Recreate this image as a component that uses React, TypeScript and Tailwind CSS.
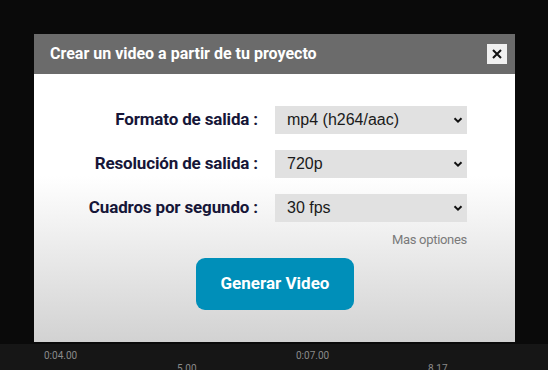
import { useState } from "react";

const Chevron = () => (
    <svg width="10" height="8" viewBox="0 0 10 8" className="pointer-events-none">
        <path d="M1.5 2.2 L5 5.6 L8.5 2.2" fill="none" stroke="#111" strokeWidth="2" />
    </svg>
);

type Field = {
    label: string;
    value: string;
    options: string[];
};

const SelectRow = ({ field, onChange }: { field: Field; onChange: (v: string) => void }) => (
    <div className="flex items-center h-[28px]">
        <label className="w-[224px] pr-[17px] text-right text-[17px] font-bold text-[#161638] tracking-[-0.15px] font-['Roboto',sans-serif]">
            {field.label}
        </label>
        <div className="relative w-[192px] h-[28px] bg-[#e1e1e1]">
            <select
                value={field.value}
                onChange={e => onChange(e.target.value)}
                className="appearance-none w-full h-full bg-transparent pl-[12px] text-[16px] text-[#1a1a1a] font-['Liberation_Sans',Arial,sans-serif] outline-none"
            >
                {field.options.map(o => (
                    <option key={o}>{o}</option>
                ))}
            </select>
            <span className="absolute right-[4px] top-[10px]">
                <Chevron />
            </span>
        </div>
    </div>
);

const App = () => {
    const [fields, setFields] = useState<Field[]>([
        { label: "Formato de salida :", value: "mp4 (h264/aac)", options: ["mp4 (h264/aac)", "webm (vp9)"] },
        { label: "Resolución de salida :", value: "720p", options: ["480p", "720p", "1080p"] },
        { label: "Cuadros por segundo :", value: "30 fps", options: ["24 fps", "30 fps", "60 fps"] },
    ]);

    return (
        <div className="w-[548px] h-[370px] bg-[#0a0a0a] flex flex-col overflow-hidden font-['Roboto',sans-serif]">
            <div className="h-[34px]" />
            <div className="ml-[34px] w-[481px] h-[308px] flex flex-col">
                <div className="h-[40px] bg-[#6b6b6b] flex items-center justify-between pl-[16px] pr-[8px]">
                    <h2 className="text-white text-[16px] font-bold">
                        Crear un video a partir de tu proyecto
                    </h2>
                    <button className="w-[20px] h-[20px] bg-[#f0f0f0] flex items-center justify-center">
                        <svg width="10" height="10" viewBox="0 0 10 10">
                            <path d="M1 1 L9 9 M9 1 L1 9" stroke="#111" strokeWidth="2" />
                        </svg>
                    </button>
                </div>
                <div className="flex-1 bg-[linear-gradient(to_bottom,#ffffff_0%,#ffffff_38%,#d2d2d2_100%)] flex flex-col pt-[32px]">
                    <div className="flex flex-col gap-[16px] pl-[17px]">
                        {fields.map((f, i) => (
                            <SelectRow
                                key={f.label}
                                field={f}
                                onChange={v =>
                                    setFields(cur => cur.map((c, j) => (j === i ? { ...c, value: v } : c)))
                                }
                            />
                        ))}
                    </div>
                    <div className="mt-[8px] pr-[48px] text-right text-[13px] text-[#7a7a7a] tracking-[-0.3px]">
                        Mas optiones
                    </div>
                    <div className="mt-[8px] pl-[162px]">
                        <button className="w-[158px] h-[52px] rounded-[9px] bg-[#008fb9] text-white text-[17px] font-bold">
                            Generar Video
                        </button>
                    </div>
                </div>
            </div>
            <div className="h-[2px]" />
            <div className="relative flex-1 bg-[#161616] text-[10px] text-[#8a8a8a]">
                <span className="absolute left-[44px] top-[4px]">0:04.00</span>
                <span className="absolute left-[177px] top-[17px]">5.00</span>
                <span className="absolute left-[296px] top-[4px]">0:07.00</span>
                <span className="absolute left-[428px] top-[17px]">8.17</span>
            </div>
        </div>
    );
};

export default App;
